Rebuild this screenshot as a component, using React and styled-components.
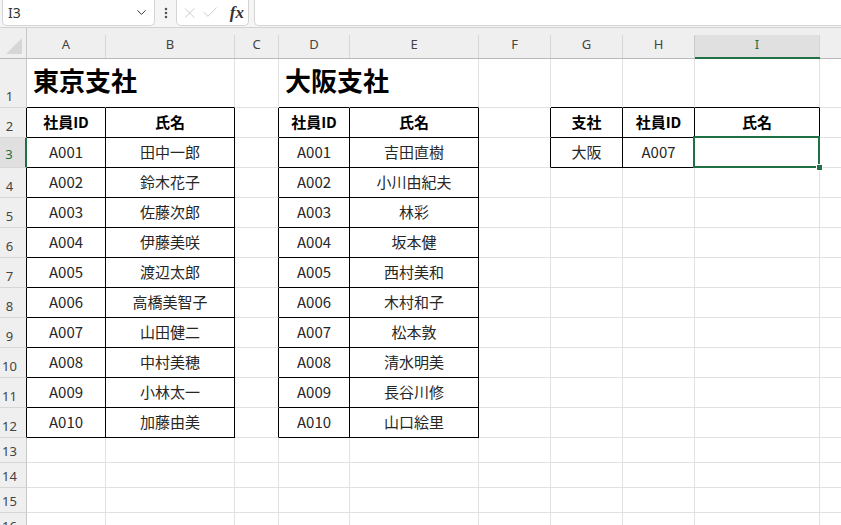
import React from 'react'
import styled, { createGlobalStyle, css } from 'styled-components'
import { ChevronDown, EllipsisVertical, X, Check } from 'lucide-react'

const GlobalStyle = createGlobalStyle`
	html, body {
		margin: 0;
		padding: 0;
		background: #fff;
		overflow: hidden;
	}
	body {
		font-family: "Noto Sans CJK JP", "Noto Sans", sans-serif;
	}
`

// J is only partly in view, its letter lies past the window edge
const COLS = ['A', 'B', 'C', 'D', 'E', 'F', 'G', 'H', 'I', '']
const ROWS = Array.from({ length: 16 }, (_, i) => i + 1)
const SELECTED = { col: 9, row: 3 }

const tokyo = [
	['A001', '田中一郎'],
	['A002', '鈴木花子'],
	['A003', '佐藤次郎'],
	['A004', '伊藤美咲'],
	['A005', '渡辺太郎'],
	['A006', '高橋美智子'],
	['A007', '山田健二'],
	['A008', '中村美穂'],
	['A009', '小林太一'],
	['A010', '加藤由美'],
]

const osaka = [
	['A001', '吉田直樹'],
	['A002', '小川由紀夫'],
	['A003', '林彩'],
	['A004', '坂本健'],
	['A005', '西村美和'],
	['A006', '木村和子'],
	['A007', '松本敦'],
	['A008', '清水明美'],
	['A009', '長谷川修'],
	['A010', '山口絵里'],
]

// bordered ranges (1-based col / row)
const tables = [
	{ c1: 1, c2: 2, r1: 2, r2: 12 },
	{ c1: 4, c2: 5, r1: 2, r2: 12 },
	{ c1: 7, c2: 9, r1: 2, r2: 3 },
]

const inTable = (c, r) => tables.some(t => c >= t.c1 && c <= t.c2 && r >= t.r1 && r <= t.r2)

const cells = {}
const put = (c, r, value, kind = 'data') => { cells[`${c}:${r}`] = { value, kind } }

put(1, 1, '東京支社', 'title')
put(4, 1, '大阪支社', 'title')
put(1, 2, '社員ID', 'head')
put(2, 2, '氏名', 'head')
put(4, 2, '社員ID', 'head')
put(5, 2, '氏名', 'head')
tokyo.forEach(([id, name], i) => { put(1, i + 3, id); put(2, i + 3, name) })
osaka.forEach(([id, name], i) => { put(4, i + 3, id); put(5, i + 3, name) })
put(7, 2, '支社', 'head')
put(8, 2, '社員ID', 'head')
put(9, 2, '氏名', 'head')
put(7, 3, '大阪')
put(8, 3, 'A007')

const App = () => {
	return (
		<Window>
			<GlobalStyle />
			<FormulaBar>
				<NameBox>
					<NameText>I3</NameText>
					<ChevronDown size={15} strokeWidth={1.6} color="#333" />
				</NameBox>
				<Dots>
					<EllipsisVertical size={14} strokeWidth={2.4} color="#555" />
				</Dots>
				<FxBox>
					<X size={18} strokeWidth={1.2} color="#c4c4c4" />
					<Check size={19} strokeWidth={1.2} color="#c4c4c4" />
					<Fx>fx</Fx>
				</FxBox>
				<FormulaInput />
			</FormulaBar>
			<Sheet>
				<Corner>
					<CornerTriangle />
				</Corner>
				{COLS.map((name, i) => (
					<ColHead key={i} $selected={i + 1 === SELECTED.col}>
						<ColLabel $selected={i + 1 === SELECTED.col}>{name}</ColLabel>
					</ColHead>
				))}
				{ROWS.map(r => (
					<React.Fragment key={r}>
						<RowHead $selected={r === SELECTED.row} $black={inTable(1, r)}>
							{r}
						</RowHead>
						{COLS.map((_, i) => {
							const c = i + 1
							const cell = cells[`${c}:${r}`]
							return (
								<Cell
									key={c}
									$rightBlack={inTable(c, r) || inTable(c + 1, r)}
									$bottomBlack={inTable(c, r) || inTable(c, r + 1)}
									$hideRight={cell?.kind === 'title'}
									$kind={cell?.kind}
									$selected={c === SELECTED.col && r === SELECTED.row}
								>
									{cell?.value}
								</Cell>
							)
						})}
					</React.Fragment>
				))}
			</Sheet>
		</Window>
	)
}

export default App

const Window = styled.div`
	width: 841px;
	height: 525px;
	overflow: hidden;
	background: #fff;
`

const FormulaBar = styled.div`
	display: flex;
	align-items: flex-start;
	background: #f5f5f5;
	border-bottom: 1px solid #d2d2d2;
	box-sizing: border-box;
	height: 28px;
	padding: 0 0 0 2px;
`

const BarBox = styled.div`
	height: 26px;
	box-sizing: border-box;
	background: #fff;
	border: 1px solid #d4d4d4;
	border-top: none;
	border-radius: 0 0 5px 5px;
	display: flex;
	align-items: center;
`

const NameBox = styled(BarBox)`
	width: 153px;
	padding: 0 5px;
	justify-content: space-between;
`

const NameText = styled.span`
	font-family: "Noto Sans", sans-serif;
	font-size: 14px;
	color: #333;
`

const Dots = styled.div`
	width: 21px;
	height: 26px;
	display: flex;
	align-items: center;
	justify-content: center;
`

const FxBox = styled(BarBox)`
	width: 73px;
	padding: 0 4px;
	gap: 3px;
`

const Fx = styled.span`
	font-family: "Liberation Serif", serif;
	font-style: italic;
	font-weight: bold;
	font-size: 17px;
	color: #333;
	margin-left: 7px;
	line-height: 1;
`

const FormulaInput = styled(BarBox)`
	flex: 1;
	margin-left: 5px;
	border-right: none;
	border-radius: 0 0 0 5px;
`

const Sheet = styled.div`
	display: grid;
	width: max-content;
	grid-template-columns: 27px 79px 129px 44px 71px 129px 72px 72px 72px 125px 72px;
	grid-template-rows: 31px 49px repeat(11, 30px) repeat(4, 25px);
`

const Corner = styled.div`
	position: relative;
	background: #efefef;
	border-right: 1px solid #c8c8c8;
	border-bottom: 1px solid #b8b8b8;
`

const CornerTriangle = styled.div`
	position: absolute;
	right: 4px;
	bottom: 4px;
	width: 0;
	height: 0;
	border-left: 16px solid transparent;
	border-bottom: 16px solid #d6d6d6;
`

const ColHead = styled.div`
	background: #efefef;
	padding-top: 7px;
	box-sizing: border-box;
	display: flex;
	border-bottom: ${p => (p.$selected ? '2px solid #1f7145' : '1px solid #b8b8b8')};
`

const ColLabel = styled.div`
	flex: 1;
	display: flex;
	justify-content: center;
	align-items: center;
	padding-bottom: 5px;
	font-family: "Noto Sans", sans-serif;
	font-size: 13px;
	color: ${p => (p.$selected ? '#1f6e43' : '#444')};
	background: ${p => (p.$selected ? '#e0e0e0' : 'transparent')};
	border-right: 1px solid #d6d6d6;
	border-left: ${p => (p.$selected ? '1px solid #c8c8c8' : 'none')};
	margin-left: ${p => (p.$selected ? '-1px' : '0')};
`

const RowHead = styled.div`
	box-sizing: border-box;
	display: flex;
	align-items: flex-end;
	justify-content: center;
	padding: 0 7px 4px 0;
	font-family: "Noto Sans", sans-serif;
	font-size: 13px;
	line-height: 1;
	background: ${p => (p.$selected ? '#e0e0e0' : '#efefef')};
	color: ${p => (p.$selected ? '#1f6e43' : '#444')};
	border-bottom: 1px solid #d6d6d6;
	border-right: ${p => (p.$selected ? '2px solid #1f7145' : p.$black ? '1px solid #000' : '1px solid #c8c8c8')};
	${p => p.$selected && css`padding-bottom: 6px;`}
`

const kindStyles = {
	title: css`
		justify-content: flex-start;
		align-items: flex-end;
		padding: 0 0 14px 6px;
		font-size: 26px;
		font-weight: bold;
		color: #000;
		white-space: nowrap;
		overflow: visible;
		z-index: 1;
	`,
	head: css`
		font-weight: bold;
		color: #000;
	`,
	data: css`
		color: #262626;
	`,
}

const Cell = styled.div`
	position: relative;
	box-sizing: border-box;
	min-width: 0;
	display: flex;
	align-items: center;
	justify-content: center;
	font-size: 15px;
	line-height: 1;
	padding-bottom: 3px;
	border-right: 1px solid ${p => (p.$hideRight ? 'transparent' : p.$rightBlack ? '#000' : '#e1e1e1')};
	border-bottom: 1px solid ${p => (p.$bottomBlack ? '#000' : '#e1e1e1')};
	${p => kindStyles[p.$kind] || ''}

	${p => p.$selected && css`
		&::after {
			content: '';
			position: absolute;
			top: -2px;
			left: -2px;
			right: -1px;
			bottom: -1px;
			border: 2px solid #1f7145;
			z-index: 2;
		}
		&::before {
			content: '';
			position: absolute;
			right: -4px;
			bottom: -4px;
			width: 5px;
			height: 5px;
			background: #1f7145;
			border: 1px solid #fff;
			z-index: 3;
		}
	`}
`
